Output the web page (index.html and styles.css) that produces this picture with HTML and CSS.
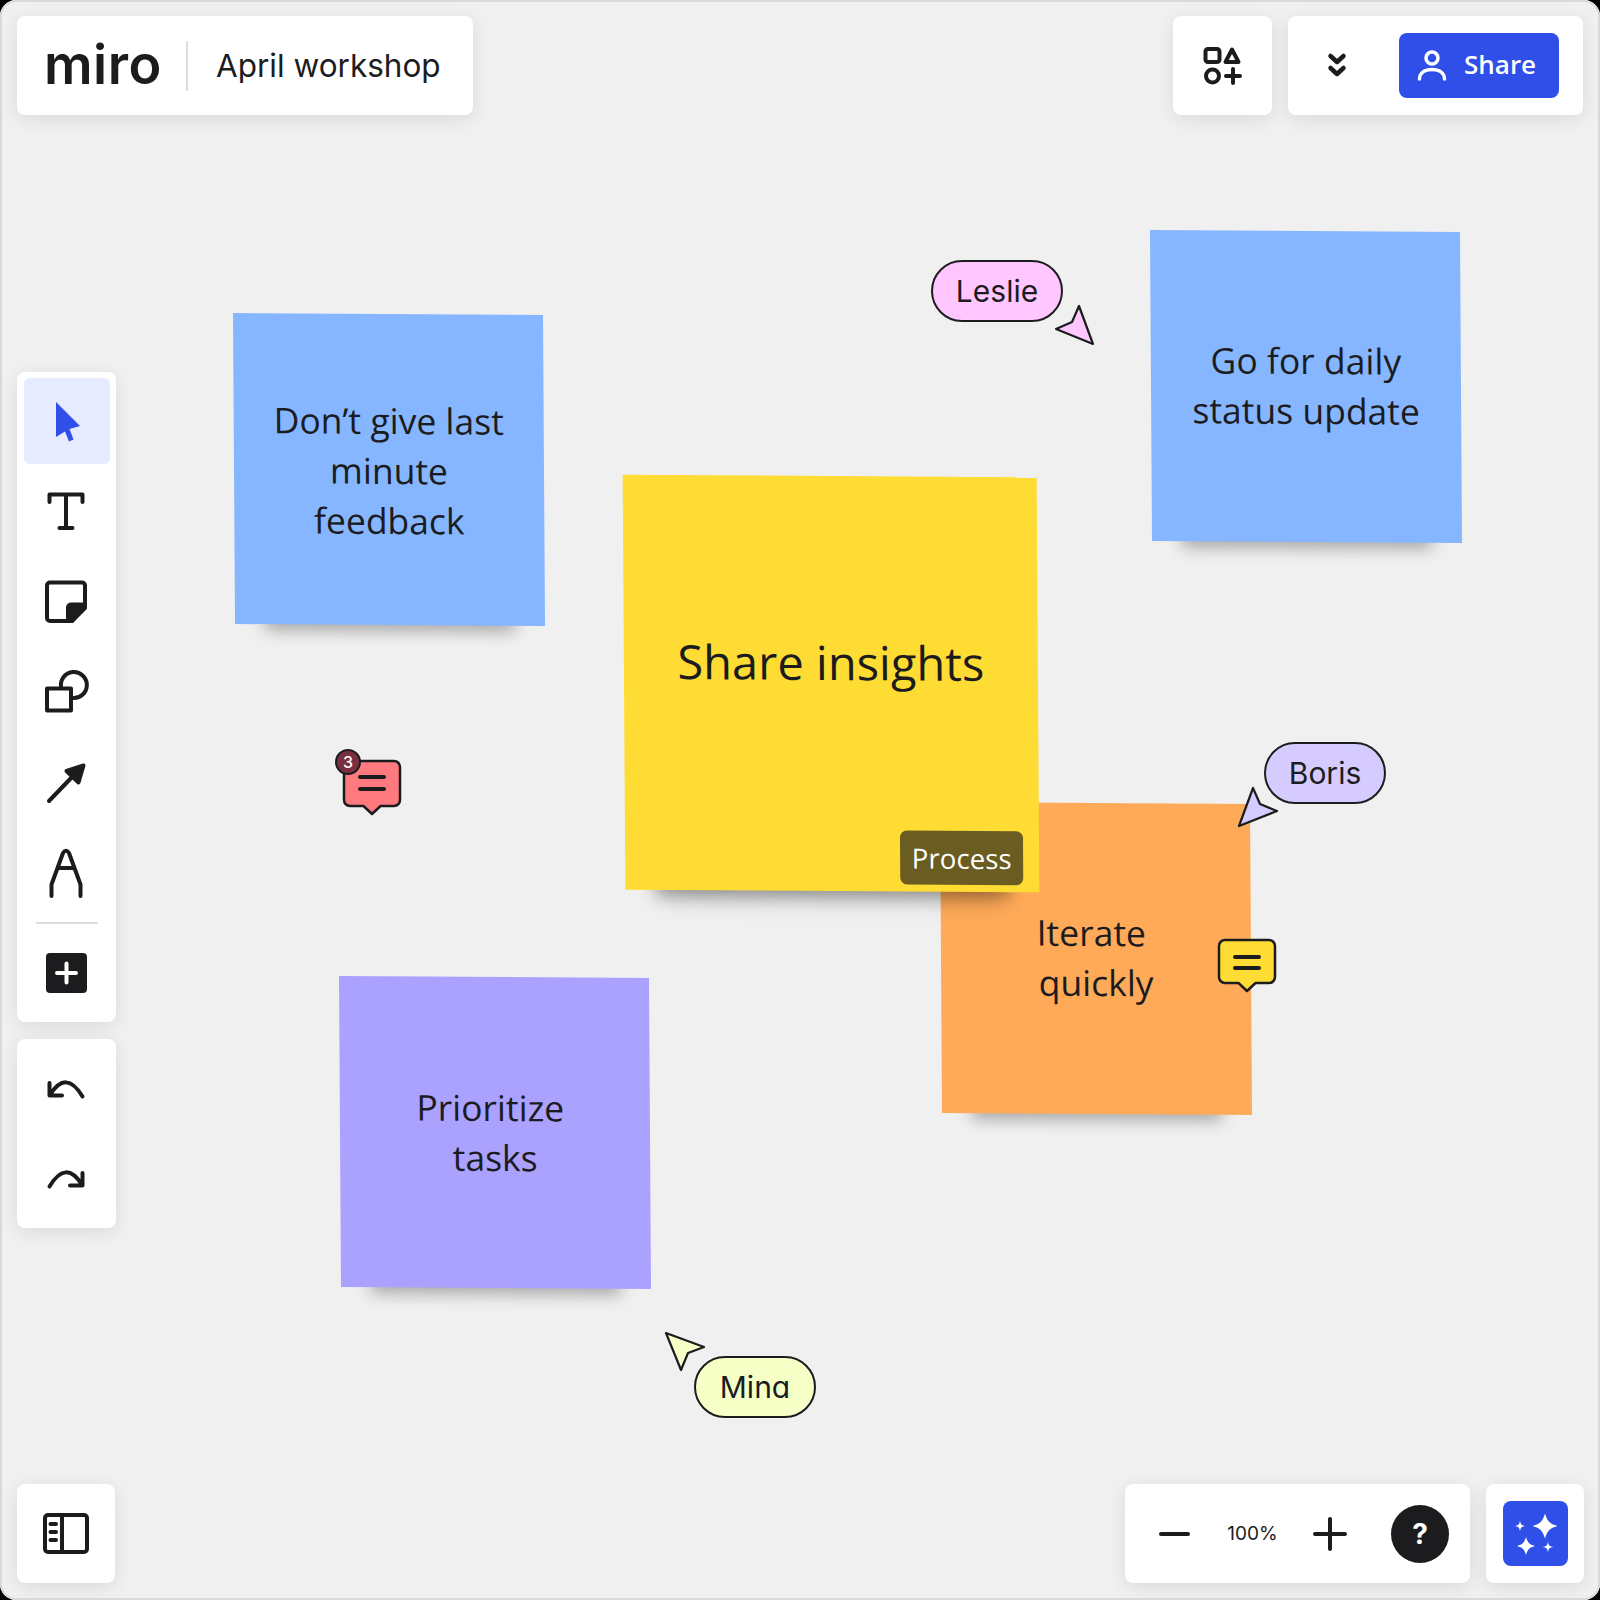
FILE: index.html
```html
<!DOCTYPE html>
<html lang="en">
<head>
    <meta charset="UTF-8">
    <meta name="viewport" content="width=device-width, initial-scale=1.0">
    <title>April workshop</title>
    <link rel="stylesheet" href="styles.css">
</head>
<body>
<div class="board">
    <!-- Free canvas: notes, comments and cursors -->
    <div class="canvas">
        <div class="sticky sticky-orange">Iterate&nbsp;<br>quickly</div>
        <div class="sticky sticky-blue-left">Don’t give last<br>minute<br>feedback</div>
        <div class="sticky sticky-blue-right">Go for daily<br>status update</div>
        <div class="sticky sticky-purple">Prioritize&nbsp;<br>tasks</div>
        <div class="sticky sticky-yellow">
            Share insights
            <span class="tag">Process</span>
        </div>

        <svg class="comment comment-red" width="66" height="64" viewBox="0 0 66 64">
            <path class="bubble" d="M8 8H52a6 6 0 0 1 6 6V47a6 6 0 0 1-6 6H38.500L30 61 21.500 53H8a6 6 0 0 1-6-6V14a6 6 0 0 1 6-6Z"/>
            <path class="bubble-lines" d="M18 24H42M18 36H42"/>
        </svg>
        <span class="comment-count">3</span>

        <svg class="comment comment-yellow" width="62" height="58" viewBox="0 0 62 58">
            <path class="bubble" d="M8 2H52a6 6 0 0 1 6 6V39a6 6 0 0 1-6 6H38.500L30 53 21.500 45H8a6 6 0 0 1-6-6V8a6 6 0 0 1 6-6Z"/>
            <path class="bubble-lines" d="M18 19H42M18 30H42"/>
        </svg>

        <span class="name name-leslie">Leslie</span>
        <svg class="pointer pointer-leslie" width="44" height="44" viewBox="0 0 44 44">
            <path d="M25 2 39 40 2 25 18 18Z"/>
        </svg>

        <span class="name name-boris">Boris</span>
        <svg class="pointer pointer-boris" width="44" height="44" viewBox="0 0 44 44">
            <path d="M16 2 23 18 40 25 2 40Z"/>
        </svg>

        <span class="name name-mina">Mina</span>
        <svg class="pointer pointer-mina" width="44" height="44" viewBox="0 0 44 44">
            <path d="M2 2 40 16 24 22 17 39Z"/>
        </svg>
    </div>

    <!-- Board controls -->
    <div class="chrome">
        <div class="row row-top">
            <div class="panel title-panel">
                <span class="logo">miro</span>
                <span class="title">April workshop</span>
            </div>
            <div class="row-group">
                <div class="panel square-panel">
                    <svg class="icon" width="48" height="48" viewBox="0 0 48 48">
                        <rect x="6.500" y="7" width="14" height="13" rx="2.500"/>
                        <path d="M33 7.500 39.500 20H26.500Z"/>
                        <circle cx="13.500" cy="34" r="6.500"/>
                        <path d="M27 34H41M34 27V41"/>
                    </svg>
                </div>
                <div class="panel share-panel">
                    <svg class="icon icon-bold" width="24" height="32" viewBox="0 0 24 32">
                        <path d="M5.500 6 12 12 18.500 6M5.500 18 12 24 18.500 18"/>
                    </svg>
                    <div class="share-button">
                        <svg class="icon icon-white" width="32" height="32" viewBox="0 0 32 32">
                            <circle cx="16" cy="8" r="6"/>
                            <path d="M3.500 29C3.500 22.500 9 19.500 16 19.500S28.500 22.500 28.500 29"/>
                        </svg>
                        <span class="share-label">Share</span>
                    </div>
                </div>
            </div>
        </div>

        <div class="middle">
            <div class="tools">
                <div class="panel toolbar">
                    <div class="tool tool-active">
                        <svg width="48" height="48" viewBox="0 0 48 48">
                            <path class="pointer-arrow" d="M14 5 38 29 27.500 32 31.500 42.500 27 44.500 23 34.500 14 40Z"/>
                        </svg>
                    </div>
                    <div class="tool">
                        <svg class="icon" width="48" height="48" viewBox="0 0 48 48">
                            <path d="M7.500 15V7.500H40.500V15M24 7.500V41M17.500 41H30.500"/>
                        </svg>
                    </div>
                    <div class="tool">
                        <svg class="icon" width="48" height="48" viewBox="0 0 48 48">
                            <path d="M8 5.500H40a3 3 0 0 1 3 3V30L30 44H8a3 3 0 0 1-3-3V8.500a3 3 0 0 1 3-3Z"/>
                            <path class="solid" d="M43 27.500H29a3 3 0 0 0-3 3V44H30L43 31Z"/>
                        </svg>
                    </div>
                    <div class="tool">
                        <svg class="icon" width="48" height="48" viewBox="0 0 48 48">
                            <rect x="5" y="21.500" width="24" height="22"/>
                            <path d="M19 20A13 13 0 1 1 31 31"/>
                        </svg>
                    </div>
                    <div class="tool">
                        <svg class="icon" width="48" height="48" viewBox="0 0 48 48">
                            <path d="M7 44 32 18"/>
                            <path class="solid" d="M41.500 8.500 36.500 25.500 24.500 14Z"/>
                        </svg>
                    </div>
                    <div class="tool">
                        <svg class="icon tall" width="48" height="54" viewBox="0 0 48 54">
                            <path d="M9.500 52V40.500L21 9Q24 4.500 27 9L38.500 40.500V52M16.500 24H31.500"/>
                        </svg>
                    </div>
                    <div class="divider"></div>
                    <div class="tool">
                        <svg width="48" height="48" viewBox="0 0 48 48">
                            <rect class="add-box" x="4" y="4" width="41" height="40" rx="4"/>
                            <path class="add-plus" d="M15 24H34M24.500 14.500V33.500"/>
                        </svg>
                    </div>
                </div>
                <div class="panel toolbar history">
                    <div class="tool">
                        <svg class="icon" width="48" height="48" viewBox="0 0 48 48">
                            <path d="M7.500 19V31.500H20M8 31Q24 5 40.500 32.500"/>
                        </svg>
                    </div>
                    <div class="tool">
                        <svg class="icon flip" width="48" height="48" viewBox="0 0 48 48">
                            <path d="M7.500 19V31.500H20M8 31Q24 5 40.500 32.500"/>
                        </svg>
                    </div>
                </div>
            </div>
        </div>

        <div class="row">
            <div class="panel square-panel bottom-square">
                <svg class="icon" width="48" height="48" viewBox="0 0 48 48">
                    <rect x="3" y="5" width="42" height="37" rx="3"/>
                    <path d="M20 5V42"/>
                    <path d="M8.500 14H14M8.500 22H14M8.500 30H14"/>
                </svg>
            </div>
            <div class="row-group">
                <div class="panel zoom-panel">
                    <svg class="icon" width="48" height="48" viewBox="0 0 48 48">
                        <path d="M11 24H38"/>
                    </svg>
                    <span class="zoom-value">100%</span>
                    <svg class="icon" width="48" height="48" viewBox="0 0 48 48">
                        <path d="M9 24H39M24 9V39"/>
                    </svg>
                    <span class="help">?</span>
                </div>
                <div class="panel square-panel bottom-square">
                    <div class="ai-button">
                        <svg width="65" height="65" viewBox="0 0 65 65">
                            <path class="spark" transform="translate(42 25) scale(12.500)" d="M0-1C.2-.35.35-.2 1 0 .35.2.2.35 0 1-.2.35-.35.2-1 0-.35-.2-.2-.35 0-1Z"/>
                            <path class="spark" transform="translate(23 45) scale(9)" d="M0-1C.2-.35.35-.2 1 0 .35.2.2.35 0 1-.2.35-.35.2-1 0-.35-.2-.2-.35 0-1Z"/>
                            <path class="spark" transform="translate(17 25) scale(5.500)" d="M0-1C.12-.25.25-.12 1 0 .25.12.12.25 0 1-.12.25-.25.12-1 0-.25-.12-.12-.25 0-1Z"/>
                            <path class="spark" transform="translate(45 46) scale(5.500)" d="M0-1C.12-.25.25-.12 1 0 .25.12.12.25 0 1-.12.25-.25.12-1 0-.25-.12-.12-.25 0-1Z"/>
                        </svg>
                    </div>
                </div>
            </div>
        </div>
    </div>
</div>
</body>
</html>
```

FILE: styles.css
```css
* {
    margin: 0;
    padding: 0;
    box-sizing: border-box;
}

body {
    background: #000;
    font-family: "Inter", "Liberation Sans", sans-serif;
    color: #1c1c1e;
}

.board {
    position: relative;
    width: 1600px;
    height: 1600px;
    background: #f0f0f0;
    border-radius: 16px;
    box-shadow: inset 0 0 0 2px #d9d9d9;
    overflow: hidden;
}

/* Canvas */
.canvas {
    position: absolute;
    top: 0;
    left: 0;
    width: 100%;
    height: 100%;
}

.sticky {
    position: absolute;
    display: flex;
    align-items: center;
    justify-content: center;
    text-align: center;
    width: 310px;
    height: 311px;
    font-family: "Open Sans", sans-serif;
    font-size: 35.5px;
    line-height: 50px;
    color: #1c1c1e;
    transform: skew(0.37deg, 0.37deg);
    box-shadow: 0 36px 16px -30px rgba(0, 0, 0, 0.3);
}

.sticky-blue-left { left: 234px; top: 314px; background: #85b6ff; }
.sticky-blue-right { left: 1151px; top: 231px; padding-bottom: 3px; background: #85b6ff; }
.sticky-purple { left: 340px; top: 977px; padding-bottom: 1px; background: #aba1ff; }
.sticky-orange { left: 941px; top: 803px; padding-bottom: 3px; background: #ffaa58; }

.sticky-yellow {
    left: 624px;
    top: 476px;
    width: 414px;
    height: 415px;
    padding-bottom: 43px;
    background: #ffdc33;
    font-size: 47px;
    box-shadow: 0 36px 16px -30px rgba(0, 0, 0, 0.3), 0 44px 28px -38px rgba(0, 0, 0, 0.18);
}

.tag {
    position: absolute;
    right: 16px;
    bottom: 7px;
    width: 123px;
    height: 54px;
    line-height: 54px;
    background: #6b5d22;
    border-radius: 7px;
    color: #fff;
    font-size: 27.7px;
}

/* Comments */
.comment {
    position: absolute;
}

.comment-red { left: 342px; top: 753px; }
.comment-yellow { left: 1217px; top: 938px; }

.comment-red .bubble { fill: #ff7a7f; }
.comment-yellow .bubble { fill: #ffdc33; }

.bubble {
    stroke: #1c1c1e;
    stroke-width: 2.5;
    stroke-linejoin: round;
}

.bubble-lines {
    fill: none;
    stroke: #1c1c1e;
    stroke-width: 4;
    stroke-linecap: round;
}

.comment-count {
    position: absolute;
    left: 335px;
    top: 749px;
    width: 26px;
    height: 26px;
    line-height: 22px;
    text-align: center;
    border: 2px solid #1c1c1e;
    border-radius: 50%;
    background: #7a3040;
    color: #fff;
    font-size: 16px;
    font-weight: 500;
}

/* Cursors */
.name {
    position: absolute;
    display: flex;
    align-items: center;
    justify-content: center;
    height: 62px;
    border: 2px solid #1c1c1e;
    border-radius: 31px;
    font-size: 30px;
    font-feature-settings: "cv11";
}

.name-leslie { left: 931px; top: 260px; width: 132px; background: #ffc6ff; }
.name-boris { left: 1264px; top: 742px; width: 122px; background: #d5cbff; }
.name-mina { left: 694px; top: 1356px; width: 122px; background: #f5ffc6; }

.pointer {
    position: absolute;
}

.pointer path {
    stroke: #1c1c1e;
    stroke-width: 2.2;
    stroke-linejoin: round;
}

.pointer-leslie { left: 1054px; top: 304px; }
.pointer-leslie path { fill: #ffc6ff; }

.pointer-boris { left: 1237px; top: 786px; }
.pointer-boris path { fill: #d5cbff; }

.pointer-mina { left: 664px; top: 1331px; }
.pointer-mina path { fill: #f5ffc6; }

/* Controls */
.chrome {
    position: relative;
    display: flex;
    flex-direction: column;
    height: 100%;
    padding: 16px 16px 17px 17px;
}

.row {
    display: flex;
    justify-content: space-between;
}

.row-top {
    padding-right: 1px;
}

.row-group {
    display: flex;
    gap: 16px;
}

.middle {
    flex: 1;
    display: flex;
    align-items: center;
}

.tools {
    display: flex;
    flex-direction: column;
    gap: 17px;
}

.panel {
    display: flex;
    align-items: center;
    height: 99px;
    background: #fff;
    border-radius: 8px;
    box-shadow: 0 4px 18px rgba(0, 0, 0, 0.09);
}

.title-panel {
    width: 456px;
    padding-left: 27px;
}

.logo {
    width: 144px;
    height: 50px;
    font-size: 54px;
    font-weight: 600;
    line-height: 48px;
    letter-spacing: 0.5px;
    border-right: 2px solid #ddd;
}

.title {
    margin-left: 28px;
    font-size: 31.5px;
}

.square-panel {
    width: 99px;
    justify-content: center;
}

.bottom-square {
    width: 98px;
}

.share-panel {
    width: 295px;
    padding-left: 37px;
    padding-right: 24px;
    justify-content: space-between;
}

.share-button {
    display: flex;
    align-items: center;
    gap: 16px;
    width: 160px;
    height: 65px;
    padding-left: 17px;
    background: #2f4fe8;
    border-radius: 8px;
    color: #fff;
    font-family: "Open Sans", sans-serif;
    font-size: 26px;
    font-weight: 600;
}

.share-label {
    margin-bottom: 4px;
}

.icon {
    display: block;
    fill: none;
    stroke: #1c1c1e;
    stroke-width: 4;
    stroke-linecap: round;
    stroke-linejoin: round;
}

.icon-bold {
    stroke-width: 4.5;
}

.icon-white {
    stroke: #fff;
    stroke-width: 3.5;
}

.icon .solid {
    fill: #1c1c1e;
}

.flip {
    transform: scaleX(-1);
}

/* Left toolbar */
.toolbar {
    flex-direction: column;
    gap: 4px;
    width: 99px;
    height: auto;
    padding: 6px 7px;
}

.tool {
    display: flex;
    align-items: center;
    justify-content: center;
    width: 86px;
    height: 86px;
    padding-right: 1px;
    border-radius: 6px;
}

.tool-active {
    background: #e6ebff;
}

.pointer-arrow {
    fill: #2f4fe8;
}

.divider {
    width: 62px;
    height: 2px;
    margin: 4px 0 2px;
    background: #ddd;
}

.add-box {
    fill: #1c1c1e;
}

.add-plus {
    fill: none;
    stroke: #fff;
    stroke-width: 4;
    stroke-linecap: round;
}

.history {
    padding-bottom: 7px;
}

/* Bottom right */
.zoom-panel {
    width: 345px;
    padding-left: 25px;
}

.zoom-value {
    width: 108px;
    padding-left: 1px;
    text-align: center;
    font-size: 19px;
}

.help {
    width: 58px;
    height: 58px;
    margin-left: 37px;
    line-height: 58px;
    text-align: center;
    background: #1c1c1e;
    border-radius: 50%;
    color: #fff;
    font-size: 28px;
    font-weight: 700;
}

.ai-button {
    width: 65px;
    height: 65px;
    background: #2f4fe8;
    border-radius: 8px;
}

.ai-button svg {
    display: block;
}

.spark {
    fill: #fff;
}
```
